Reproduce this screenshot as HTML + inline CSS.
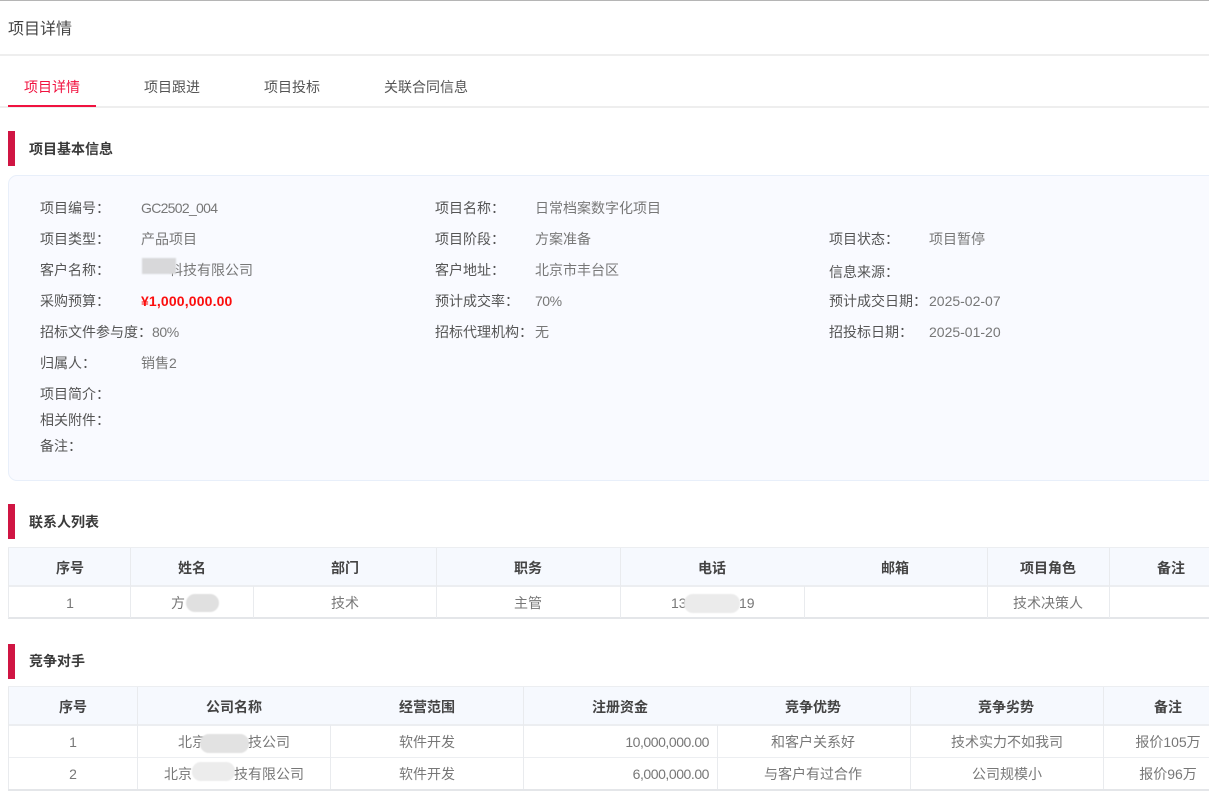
<!DOCTYPE html>
<html lang="zh-CN">
<head>
<meta charset="utf-8">
<title>项目详情</title>
<style>
html,body{margin:0;padding:0;background:#fff}
body{width:1209px;height:806px;position:relative;overflow:hidden;font-family:"Liberation Sans","Noto Sans CJK SC",sans-serif;font-size:14px;color:#666}
.a{position:absolute}
.t{position:absolute;white-space:nowrap;line-height:20px;height:20px;filter:blur(.25px)}
.l{color:#555}
.v{color:#777}
.c{transform:translateX(-50%)}
.r{transform:translateX(-100%)}
.h{font-weight:700;color:#444}
.sec{font-weight:700;color:#3a3a3a;left:29px}
.bar{position:absolute;left:8px;width:7px;height:35px;background:#d01543}
.ln{position:absolute;background:#e9ebee;width:1px}
.bg{position:absolute;background:#f6f9fe}
.blur{position:absolute;background:#e4e4e4;border-radius:9px;filter:blur(.6px)}
</style>
</head>
<body>
<div class="a" style="left:0;top:0;width:1209px;height:1px;background:#b5b5b5"></div>
<div class="t" style="left:8px;top:20px;font-size:16px;color:#444">项目详情</div>
<div class="a" style="left:0;top:54px;width:1209px;height:2px;background:#eeeeee"></div>

<div class="t" style="left:24px;top:77px;color:#f0123f">项目详情</div>
<div class="t" style="left:144px;top:77px;color:#555">项目跟进</div>
<div class="t" style="left:264px;top:77px;color:#555">项目投标</div>
<div class="t" style="left:384px;top:77px;color:#555">关联合同信息</div>
<div class="a" style="left:0;top:106px;width:1209px;height:2px;background:#eeeeee"></div>
<div class="a" style="left:8px;top:105px;width:88px;height:2px;background:#f0123f"></div>

<div class="bar" style="top:131px"></div>
<div class="t sec" style="top:139px">项目基本信息</div>

<div class="a" style="left:8px;top:175px;width:1230px;height:306px;box-sizing:border-box;background:#f9faff;border:1px solid #e8effa;border-radius:9px"></div>

<div class="t l" style="left:40px;top:198px">项目编号：</div><div class="t v" style="left:141px;top:198px;letter-spacing:-.7px">GC2502_004</div>
<div class="t l" style="left:435px;top:198px">项目名称：</div><div class="t v" style="left:535px;top:198px">日常档案数字化项目</div>

<div class="t l" style="left:40px;top:229px">项目类型：</div><div class="t v" style="left:141px;top:229px">产品项目</div>
<div class="t l" style="left:435px;top:229px">项目阶段：</div><div class="t v" style="left:535px;top:229px">方案准备</div>
<div class="t l" style="left:829px;top:229px">项目状态：</div><div class="t v" style="left:929px;top:229px">项目暂停</div>

<div class="t l" style="left:40px;top:260px">客户名称：</div><div class="t v" style="left:169px;top:260px">科技有限公司</div>
<div class="a" style="left:142px;top:258px;width:34px;height:16px;background:#d8d8da;filter:blur(.7px)"></div>
<div class="t l" style="left:435px;top:260px">客户地址：</div><div class="t v" style="left:535px;top:260px">北京市丰台区</div>
<div class="t l" style="left:829px;top:262px">信息来源：</div>

<div class="t l" style="left:40px;top:291px">采购预算：</div><div class="t" style="left:141px;top:291px;color:#fb0d0d;font-weight:700;letter-spacing:.15px">¥1,000,000.00</div>
<div class="t l" style="left:435px;top:291px">预计成交率：</div><div class="t v" style="left:535px;top:291px;letter-spacing:-.5px">70%</div>
<div class="t l" style="left:829px;top:291px">预计成交日期：</div><div class="t v" style="left:929px;top:291px">2025-02-07</div>

<div class="t l" style="left:40px;top:322px">招标文件参与度：</div><div class="t v" style="left:152px;top:322px;letter-spacing:-.4px">80%</div>
<div class="t l" style="left:435px;top:322px">招标代理机构：</div><div class="t v" style="left:535px;top:322px">无</div>
<div class="t l" style="left:829px;top:322px">招投标日期：</div><div class="t v" style="left:929px;top:322px">2025-01-20</div>

<div class="t l" style="left:40px;top:353px">归属人：</div><div class="t v" style="left:141px;top:353px">销售2</div>
<div class="t l" style="left:40px;top:384px">项目简介：</div>
<div class="t l" style="left:40px;top:410px">相关附件：</div>
<div class="t l" style="left:40px;top:436px">备注：</div>

<!-- 联系人列表 -->
<div class="bar" style="top:504px"></div>
<div class="t sec" style="top:512px">联系人列表</div>
<div class="bg" style="left:8px;top:548px;width:1201px;height:38px"></div>
<div class="a" style="left:8px;top:547px;width:1201px;height:1px;background:#eceef1"></div>
<div class="a" style="left:8px;top:585px;width:1201px;height:2px;background:#eceef1"></div>
<div class="a" style="left:8px;top:617px;width:1201px;height:2px;background:#e4e6e9"></div>
<div class="ln" style="left:8px;top:548px;height:70px"></div>
<div class="ln" style="left:130px;top:548px;height:70px"></div>
<div class="ln" style="left:253px;top:586px;height:32px"></div>
<div class="ln" style="left:436px;top:548px;height:70px"></div>
<div class="ln" style="left:620px;top:548px;height:70px"></div>
<div class="ln" style="left:804px;top:586px;height:32px"></div>
<div class="ln" style="left:987px;top:548px;height:70px"></div>
<div class="ln" style="left:1109px;top:548px;height:70px"></div>

<div class="t h c" style="left:70px;top:558px">序号</div>
<div class="t h c" style="left:192px;top:558px">姓名</div>
<div class="t h c" style="left:345px;top:558px">部门</div>
<div class="t h c" style="left:528px;top:558px">职务</div>
<div class="t h c" style="left:712px;top:558px">电话</div>
<div class="t h c" style="left:895px;top:558px">邮箱</div>
<div class="t h c" style="left:1048px;top:558px">项目角色</div>
<div class="t h c" style="left:1171px;top:558px">备注</div>

<div class="t v c" style="left:70px;top:593px">1</div>
<div class="t v" style="left:171px;top:593px">方</div>
<div class="blur" style="left:186px;top:594px;width:33px;height:18px;background:#e0e0e0"></div>
<div class="t v c" style="left:345px;top:593px">技术</div>
<div class="t v c" style="left:528px;top:593px">主管</div>
<div class="t v" style="left:671px;top:593px">13</div>
<div class="t v" style="left:739px;top:593px">19</div>
<div class="blur" style="left:684px;top:594px;width:56px;height:19px;background:#ebebeb"></div>
<div class="t v c" style="left:1048px;top:593px">技术决策人</div>

<!-- 竞争对手 -->
<div class="bar" style="top:644px"></div>
<div class="t sec" style="top:651px">竞争对手</div>
<div class="bg" style="left:8px;top:687px;width:1201px;height:38px"></div>
<div class="a" style="left:8px;top:686px;width:1201px;height:1px;background:#eceef1"></div>
<div class="a" style="left:8px;top:724px;width:1201px;height:2px;background:#eceef1"></div>
<div class="a" style="left:8px;top:757px;width:1201px;height:1px;background:#eceef1"></div>
<div class="a" style="left:8px;top:789px;width:1201px;height:2px;background:#e4e6e9"></div>
<div class="ln" style="left:8px;top:687px;height:102px"></div>
<div class="ln" style="left:137px;top:687px;height:102px"></div>
<div class="ln" style="left:330px;top:725px;height:64px"></div>
<div class="ln" style="left:523px;top:687px;height:102px"></div>
<div class="ln" style="left:717px;top:725px;height:64px"></div>
<div class="ln" style="left:910px;top:687px;height:102px"></div>
<div class="ln" style="left:1103px;top:687px;height:102px"></div>

<div class="t h c" style="left:73px;top:697px">序号</div>
<div class="t h c" style="left:234px;top:697px">公司名称</div>
<div class="t h c" style="left:427px;top:697px">经营范围</div>
<div class="t h c" style="left:620px;top:697px">注册资金</div>
<div class="t h c" style="left:813px;top:697px">竞争优势</div>
<div class="t h c" style="left:1006px;top:697px">竞争劣势</div>
<div class="t h c" style="left:1168px;top:697px">备注</div>

<div class="t v c" style="left:73px;top:732px">1</div>
<div class="t v" style="left:178px;top:732px">北京</div>
<div class="blur" style="left:200px;top:734px;width:49px;height:19px;background:#e2e2e2"></div>
<div class="t v" style="left:248px;top:732px">技公司</div>
<div class="t v c" style="left:427px;top:732px">软件开发</div>
<div class="t v r" style="left:709px;top:732px;letter-spacing:-.45px">10,000,000.00</div>
<div class="t v c" style="left:813px;top:732px">和客户关系好</div>
<div class="t v c" style="left:1007px;top:732px">技术实力不如我司</div>
<div class="t v c" style="left:1168px;top:732px">报价105万</div>

<div class="t v c" style="left:73px;top:764px">2</div>
<div class="t v" style="left:164px;top:764px">北京</div>
<div class="blur" style="left:192px;top:762px;width:43px;height:19px;background:#ececec"></div>
<div class="t v" style="left:234px;top:764px">技有限公司</div>
<div class="t v c" style="left:427px;top:764px">软件开发</div>
<div class="t v r" style="left:709px;top:764px;letter-spacing:-.45px">6,000,000.00</div>
<div class="t v c" style="left:813px;top:764px">与客户有过合作</div>
<div class="t v c" style="left:1007px;top:764px">公司规模小</div>
<div class="t v c" style="left:1168px;top:764px">报价96万</div>
</body>
</html>
